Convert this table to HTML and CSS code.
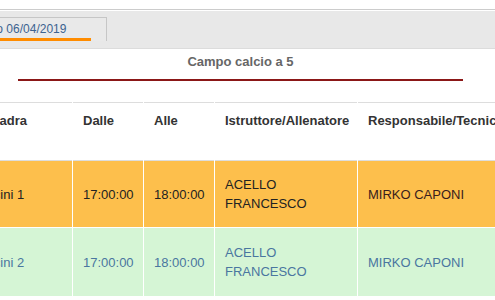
FILE: index.html
```html
<!DOCTYPE html>
<html lang="it">
<head>
<meta charset="utf-8">
<title>Campo calcio a 5</title>
<link rel="stylesheet" href="styles.css">
</head>
<body>
<div class="topline"></div>
<div class="band">
  <div class="tab"><span class="tab-link">Sabato 06/04/2019</span></div>
</div>
<div class="title-block">
  <div class="title">Campo calcio a 5</div>
  <div class="rule"></div>
</div>
<div class="table-wrap">
  <table class="schedule">
    <colgroup>
      <col class="c-team"><col class="c-time"><col class="c-time"><col class="c-coach"><col class="c-resp">
    </colgroup>
    <thead>
      <tr><th>Squadra</th><th>Dalle</th><th>Alle</th><th>Istruttore/Allenatore</th><th>Responsabile/Tecnico</th></tr>
    </thead>
    <tbody>
      <tr class="row-warn">
        <td>Pulcini 1</td><td>17:00:00</td><td>18:00:00</td><td>ACELLO FRANCESCO</td><td class="resp">MIRKO CAPONI</td>
      </tr>
      <tr class="row-ok">
        <td>Pulcini 2</td><td>17:00:00</td><td>18:00:00</td><td>ACELLO FRANCESCO</td><td>MIRKO CAPONI</td>
      </tr>
    </tbody>
  </table>
</div>
</body>
</html>
```
FILE: styles.css
```css
html, body {
  margin: 0;
  padding: 0;
  overflow: hidden;
  background: #fff;
}
body {
  font-family: "Liberation Sans", Arial, sans-serif;
  font-size: 13px;
  line-height: 19px;
  color: #333;
  width: 495px;
}
.topline {
  height: 9px;
  border-bottom: 1px solid #cccccc;
}
.band {
  margin-top: 1px;
  background: #e8e8e8;
  border-bottom: 1px solid #dcdcdc;
  height: 38px;
  box-sizing: border-box;
  padding-top: 6px;
  display: flex;
  align-items: flex-start;
  overflow: hidden;
}
.tab {
  margin-left: -76px;
  border: 1px solid #c6c6c6;
  border-bottom: none;
  padding: 0 15px 0 15px;
  background: #e9e9e9;
  flex: none;
}
.tab-link {
  display: block;
  font-size: 12px;
  line-height: 15px;
  color: #3c6390;
  padding: 4px 25px 1px;
  border-bottom: 3px solid #ff8c00;
  white-space: nowrap;
}
.title-block {
  width: 481px;
  padding-top: 3px;
}
.title {
  text-align: center;
  font-weight: bold;
  color: #666;
}
.rule {
  margin: 8px 18px 0;
  height: 2px;
  background: #8b1717;
}
.table-wrap {
  margin-top: 20px;
  overflow: hidden;
}
.schedule {
  margin-left: -36px;
  border-collapse: separate;
  border-spacing: 1px;
  table-layout: fixed;
  width: 595px;
}
.c-team { width: 107px; }
.c-time { width: 70px; }
.c-coach { width: 142px; }
.c-resp { width: 200px; }
.schedule th,
.schedule td {
  box-sizing: border-box;
  padding: 8px 10px;
  text-align: left;
  white-space: normal;
}
.schedule th {
  height: 57px;
  vertical-align: top;
  font-weight: bold;
  color: #333;
  background: #fff;
  border-top: 1px solid #dddddd;
  white-space: nowrap;
}
.schedule td {
  vertical-align: middle;
}
.row-warn td {
  height: 67px;
  background: #fdbf4c;
  color: #222;
  border-top: 1px solid #dddddd;
}
.row-warn td.resp {
  color: #3a1c1c;
}
.row-ok td {
  height: 68px;
  background: #d5f5d5;
  color: #4a76a0;
}
```
